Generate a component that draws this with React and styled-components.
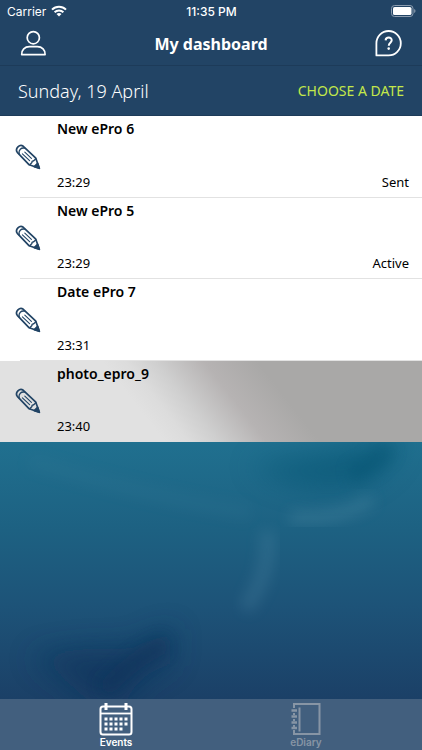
import React, { useState } from 'react';
import styled, { createGlobalStyle } from 'styled-components';

const GlobalStyle = createGlobalStyle`
  * {
    box-sizing: border-box;
  }
  body {
    margin: 0;
    font-family: "Noto Sans", "Open Sans", sans-serif;
    background-color: #1b4067;
  }
  button {
    padding: 0;
    border: 0;
    background: none;
    color: inherit;
    font-family: inherit;
    cursor: pointer;
  }
  svg {
    display: block;
  }
`;

const Screen = styled.div`
  display: flex;
  flex-direction: column;
  min-height: 100vh;
`;

const Header = styled.header`
  background-color: #224465;
  color: white;
`;

const StatusBar = styled.div`
  display: grid;
  grid-template-columns: 1fr auto 1fr;
  align-items: center;
  height: 22px;
  padding: 0 6px 0 7px;
  font-family: Inter, sans-serif;
  font-size: 12px;
`;

const Carrier = styled.div`
  display: flex;
  align-items: center;
  gap: 5px;
`;

const Clock = styled.time`
  font-weight: 500;
`;

const Battery = styled.div`
  justify-self: end;
`;

const TitleBar = styled.div`
  display: flex;
  align-items: center;
  justify-content: space-between;
  height: 44px;
  padding: 0 20px;
  border-bottom: 1px solid #1d3b59;
`;

const Title = styled.h1`
  margin: 0;
  font-size: 16px;
  line-height: 24px;
  font-weight: 700;
`;

const DateBar = styled.div`
  display: flex;
  align-items: center;
  justify-content: space-between;
  height: 50px;
  padding: 0 18px;
  border-bottom: 1px solid #1d3b59;
`;

const Today = styled.h2`
  margin: 0;
  font-size: 18px;
  line-height: 24px;
  font-weight: 300;
`;

const DateButton = styled.button`
  && {
    color: #c3e84a;
  }
  font-size: 14px;
  line-height: 24px;
`;

const List = styled.ul`
  display: grid;
  grid-auto-rows: 1fr;
  min-height: 326px;
  margin: 0;
  padding: 0;
  list-style: none;
`;

const Row = styled.li`
  display: flex;
  padding-left: 15px;
  color: black;
  background: ${(props) => (props.$selected
    ? 'linear-gradient(52deg, #e1e1e1 34%, #dcdcdc 39%, #cfcfcf 45%, #b6b3b3 55%, #a9a8a7 66%)'
    : 'linear-gradient(#e2e2e2, #e2e2e2) 20px 100% / 100% 1px no-repeat white')};
`;

const RowButton = styled.button`
  display: flex;
  flex: 1;
  align-items: center;
  gap: 16px;
  text-align: left;
`;

const RowBody = styled.span`
  display: flex;
  flex: 1;
  flex-direction: column;
  justify-content: space-between;
  align-self: stretch;
  padding: 3px 13px 6px 0;
`;

const RowName = styled.strong`
  font-size: 14px;
  line-height: 20px;
  font-weight: 600;
`;

const RowFoot = styled.span`
  display: flex;
  justify-content: space-between;
  font-size: 13px;
  line-height: 20px;
`;

const Sea = styled.main`
  flex: 1;
  display: flex;
  flex-direction: column;
  position: relative;
  background: linear-gradient(#20708f 56%, #1d6182 71%, #1d5378 84%, #1b4067 100%);
`;

const Waves = styled.svg`
  position: absolute;
  left: 0;
  bottom: 0;
  width: 100%;
  height: 258px;
`;

const Events = styled.section`
  position: relative;
`;

const TabBar = styled.nav`
  display: flex;
  height: 51px;
  padding: 0 21px;
  background-color: #425f7e;
`;

const Tab = styled.button`
  display: flex;
  flex: 1;
  flex-direction: column;
  align-items: center;
  padding-top: 3px;
  && {
    color: ${(props) => (props.$active ? 'white' : '#8795a5')};
  }
`;

const TabLabel = styled.span`
  font-family: Inter, sans-serif;
  font-size: 10px;
  line-height: 12px;
  font-weight: 600;
`;

function WifiIcon() {
  return (
    <svg width="16" height="12" viewBox="0 0 16 12" fill="none" stroke="white" strokeWidth="2" aria-hidden="true">
      <path d="M1 4.6a10 10 0 0 1 14 0" />
      <path d="M3.6 7.3a6.3 6.3 0 0 1 8.8 0" />
      <path d="M8 11.6L5.5 9.1a3.6 3.6 0 0 1 5 0z" fill="white" stroke="none" />
    </svg>
  );
}

function BatteryIcon() {
  return (
    <svg width="25" height="12" viewBox="0 0 25 12" aria-hidden="true">
      <rect x="0.5" y="0.5" width="21.5" height="11" rx="3" fill="none" stroke="#8c9db0" />
      <rect x="2" y="2" width="18.5" height="8" rx="1.6" fill="white" />
      <path d="M23.2 4a2.2 2.2 0 0 1 0 4z" fill="#8c9db0" />
    </svg>
  );
}

function UserIcon() {
  return (
    <svg width="27" height="27" viewBox="0 0 27 27" fill="none" stroke="white" strokeWidth="1.7" strokeLinejoin="round" aria-hidden="true">
      <circle cx="13.3" cy="7.7" r="6.1" />
      <path d="M1.7 24.7c-.4-4.9 3.2-8.1 7.8-8.1h7.8c4.6 0 8.2 3.2 7.8 8.1z" />
    </svg>
  );
}

function HelpIcon() {
  return (
    <svg width="27" height="27" viewBox="0 0 27 27" fill="none" stroke="white" strokeWidth="1.8" strokeLinejoin="round" aria-hidden="true">
      <path d="M1.4 25.4V13.2a12.2 12.2 0 1 1 12.2 12.2z" />
      <path d="M10.6 10.4c.2-3.8 6.2-3.7 6.1-.1 0 2.5-2.9 2.4-2.9 5.4" strokeWidth="2" />
      <circle cx="13.7" cy="18.6" r="1.3" fill="white" stroke="none" />
    </svg>
  );
}

function PencilIcon() {
  return (
    <svg width="26" height="26" viewBox="0 0 26 26" fill="none" stroke="#224465" strokeWidth="1.7" strokeLinejoin="round" strokeLinecap="round" aria-hidden="true">
      <path d="M2.3 8.3C-.3 4.6 4.6-.3 8.3 2.300L20.800 14.200 24.300 24.300 14.200 20.800z" />
      <path d="M4.200 9.800C3.200 6.200 6.200 3.200 9.800 4.200" strokeWidth="1.300" />
      <path d="M14.700 20.800L17 18.500c-.3-1 .5-1.800 1.500-1.500l2.300-2.300" strokeWidth="1.300" />
      <path d="M7.400 9.800l7.200 6.800M9.800 8.200l6.600 6.200" strokeWidth="1.100" />
      <path d="M24.300 24.300l-1.700-5-3.300 3.300z" fill="#224465" />
    </svg>
  );
}

function CalendarIcon() {
  const dots = [];
  [15.5, 20.5, 25.5].forEach((y, line) => {
    [5.5, 10.5, 15.5, 20.5, 25.5].forEach((x, i) => {
      if (line === 2 && i === 4) return;
      dots.push(<rect key={`${x}-${y}`} x={x} y={y} width="3" height="3" />);
    });
  });
  return (
    <svg width="34" height="34" viewBox="0 0 34 34" fill="currentColor" aria-hidden="true">
      <rect x="1.5" y="4.5" width="31" height="28" rx="2.5" fill="none" stroke="currentColor" strokeWidth="2" />
      <path d="M2 11.5h30" stroke="currentColor" strokeWidth="1.8" />
      <path d="M7 1v7M27 1v7" stroke="currentColor" strokeWidth="3" />
      {dots}
    </svg>
  );
}

function DiaryIcon() {
  return (
    <svg width="34" height="34" viewBox="0 0 34 34" fill="none" stroke="currentColor" strokeWidth="2" aria-hidden="true">
      <path d="M5 6V2h25.5v30H5v-4" />
      <path d="M5 11v2M5 17v2M5 23v2" />
      <path d="M10.5 5.5v24" />
      <path d="M2.5 8.5h5.5M2.5 14.5h5.5M2.5 20.5h5.5M2.5 26h5.5" strokeWidth="2.4" />
    </svg>
  );
}

const events = [
  { name: 'New ePro 6', time: '23:29', status: 'Sent' },
  { name: 'New ePro 5', time: '23:29', status: 'Active' },
  { name: 'Date ePro 7', time: '23:31' },
  { name: 'photo_epro_9', time: '23:40' },
];

function EventRow({ event, selected, onSelect }) {
  return (
    <Row $selected={selected}>
      <RowButton type="button" onClick={onSelect}>
        <PencilIcon />
        <RowBody>
          <RowName>{event.name}</RowName>
          <RowFoot>
            <span>{event.time}</span>
            <span>{event.status}</span>
          </RowFoot>
        </RowBody>
      </RowButton>
    </Row>
  );
}

function Background() {
  return (
    <Waves viewBox="0 0 422 258" preserveAspectRatio="none" aria-hidden="true">
      <defs>
        <filter id="soft" x="-50%" y="-50%" width="200%" height="200%">
          <feGaussianBlur stdDeviation="14" />
        </filter>
        <filter id="glow" x="-50%" y="-50%" width="200%" height="200%">
          <feGaussianBlur stdDeviation="7" />
        </filter>
      </defs>
      <path d="M250 24Q320 14 404 -6Q390 36 350 46Q300 54 250 24z" fill="#06516f" opacity="0.5" filter="url(#soft)" />
      <path d="M350 34Q376 26 388 6" fill="none" stroke="#06506e" strokeWidth="18" opacity="0.35" filter="url(#glow)" />
      <path d="M30 20Q150 56 250 72" fill="none" stroke="#3a7c98" strokeWidth="12" opacity="0.2" filter="url(#glow)" />
      <path d="M290 76Q340 80 372 58" fill="none" stroke="#4b87a1" strokeWidth="12" opacity="0.4" filter="url(#glow)" />
      <path d="M267 90Q272 130 245 168" fill="none" stroke="#4b82a0" strokeWidth="15" opacity="0.32" filter="url(#glow)" />
      <path d="M30 216Q90 204 130 208L174 186L170 224Q140 232 128 258L90 262Q60 232 30 216z" fill="#08315a" opacity="0.6" filter="url(#soft)" />
      <path d="M104 250Q130 220 166 202" fill="none" stroke="#08315a" strokeWidth="18" opacity="0.4" filter="url(#glow)" />
    </Waves>
  );
}

function App() {
  const [selected, setSelected] = useState(3);
  const [tab, setTab] = useState('events');

  return (
    <Screen>
      <GlobalStyle />
      <Header>
        <StatusBar>
          <Carrier>Carrier <WifiIcon /></Carrier>
          <Clock>11:35 PM</Clock>
          <Battery><BatteryIcon /></Battery>
        </StatusBar>
        <TitleBar>
          <button type="button" aria-label="Profile"><UserIcon /></button>
          <Title>My dashboard</Title>
          <button type="button" aria-label="Help"><HelpIcon /></button>
        </TitleBar>
        <DateBar>
          <Today>Sunday, 19 April</Today>
          <DateButton type="button">CHOOSE A DATE</DateButton>
        </DateBar>
      </Header>

      <Sea>
        <Background />
        <Events>
          <List>
            {events.map((event, i) => (
              <EventRow
                key={event.name} event={event}
                selected={i === selected}
                onSelect={() => setSelected(i)} />
            ))}
          </List>
        </Events>
      </Sea>

      <TabBar>
        <Tab type="button" $active={tab === 'events'} onClick={() => setTab('events')}>
          <CalendarIcon />
          <TabLabel>Events</TabLabel>
        </Tab>
        <Tab type="button" $active={tab === 'ediary'} onClick={() => setTab('ediary')}>
          <DiaryIcon />
          <TabLabel>eDiary</TabLabel>
        </Tab>
      </TabBar>
    </Screen>
  );
}

export default App;
